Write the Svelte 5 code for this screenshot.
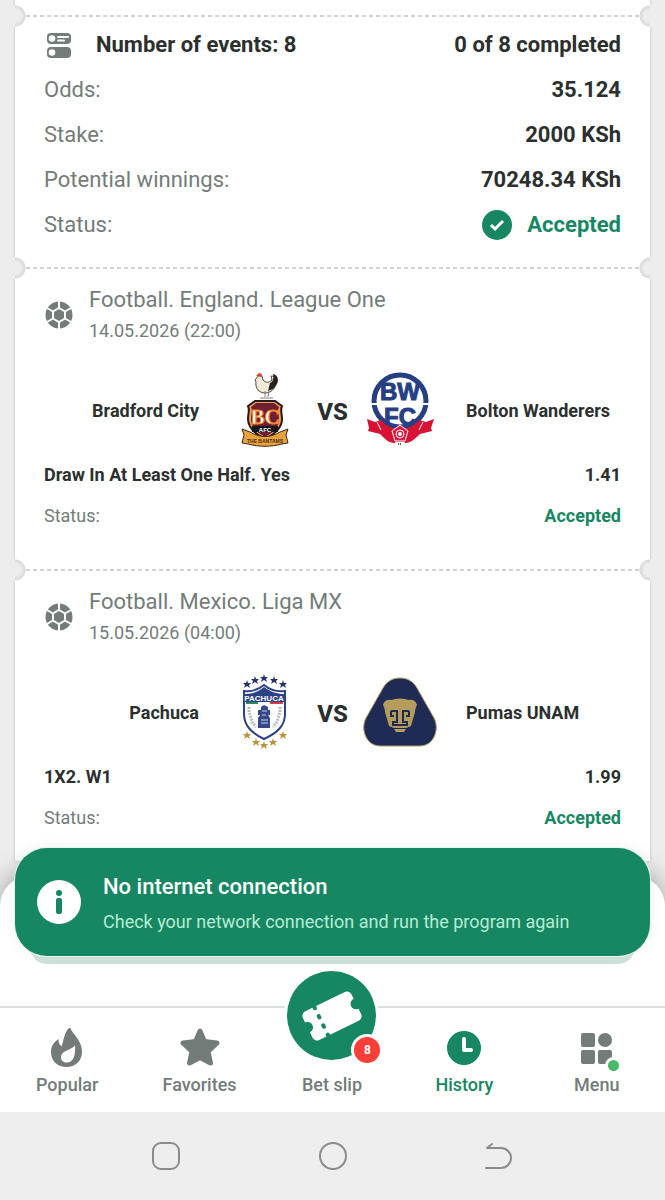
<script>
  const summary = [
    { label: "Odds:", value: "35.124" },
    { label: "Stake:", value: "2000 KSh" },
    { label: "Potential winnings:", value: "70248.34 KSh" },
  ];

  const events = [
    {
      league: "Football. England. League One",
      date: "14.05.2026 (22:00)",
      home: { name: "Bradford City", crest: bradford },
      away: { name: "Bolton Wanderers", crest: bolton },
      market: "Draw In At Least One Half. Yes",
      odds: "1.41",
    },
    {
      league: "Football. Mexico. Liga MX",
      date: "15.05.2026 (04:00)",
      home: { name: "Pachuca", crest: pachuca },
      away: { name: "Pumas UNAM", crest: pumas },
      market: "1X2. W1",
      odds: "1.99",
    },
  ];

  const blueStars = [[20, 10], [28, 6], [37, 4], [47, 6], [56, 10]];
  const goldStars = [[20, 61], [29, 68], [37, 71], [46, 68], [56, 61]];

  const tabs = [
    { label: "Popular", icon: flame },
    { label: "Favorites", icon: star },
    { label: "Bet slip", icon: ticket, count: 8 },
    { label: "History", icon: clock },
    { label: "Menu", icon: grid, dot: true },
  ];

  let active = $state("History");
</script>

{#snippet bradford()}
  <svg class="crest" viewBox="0 0 76 76" aria-hidden="true">
    <path d="M28 8l4-5 3 1 1 4c3 3 6 3 9 0l-1-4c4 0 6 3 5 7-1 6-5 10-11 10-6 0-10-5-9-11z" fill="#f3ead8" stroke="#4b463e" stroke-width="1" />
    <path d="M43 11c3-1 4-5 3-9 5 1 6 6 4 10l-4 5-5 2z" fill="#26221e" />
    <path d="M29 4l3-3 3 1-1 3z" fill="#d8432f" />
    <path d="M38 19v6M42 18l-1 7M33 26h13" stroke="#8a8274" fill="none" />
    <path d="M28 29h20l7 5c-2 4 0 8 0 13 0 9-7 15-17 20-10-5-17-11-17-20 0-5 2-9 0-13z" fill="#f0a04b" stroke="#25191c" stroke-width="2" />
    <path d="M29 31h18l5 4c-2 4 0 8 0 12 0 8-5 13-14 18-9-5-14-10-14-18 0-4 2-8 0-12z" fill="#6d1f35" />
    <text x="38" y="52" text-anchor="middle" font-family="Liberation Serif, serif" font-weight="700" font-size="21" fill="#fff" stroke="#f07d1e" stroke-width="1">BC</text>
    <path d="M25 54h26v6H25z" fill="#17171a" />
    <text x="38" y="60" text-anchor="middle" font-family="Liberation Sans, sans-serif" font-weight="700" font-size="6" fill="#fff">AFC</text>
    <path d="M15 57l8 3c10 6 20 6 30 0l8-3-2 6 2 8-6 1c-11 3-23 3-34 0l-6-1 2-8z" fill="#e8a23d" stroke="#3c2a18" />
    <text x="38" y="71" text-anchor="middle" font-family="Liberation Sans, sans-serif" font-weight="700" font-size="5" fill="#4a2d12">THE BANTAMS</text>
  </svg>
{/snippet}

{#snippet bolton()}
  <svg class="crest" viewBox="0 0 76 76" aria-hidden="true">
    <g font-family="Liberation Sans, sans-serif" font-weight="700" font-size="24" text-anchor="middle" fill="#263f82" stroke="#263f82">
      <text x="38" y="28">BW</text>
      <text x="38" y="53">FC</text>
    </g>
    <circle cx="38" cy="29" r="26" fill="none" stroke="#263f82" stroke-width="5" />
    <path d="M9 32h58" stroke="#fff" stroke-width="2" />
    <path d="M5 47l8 3 6-2c5 6 11 9 19 9s14-3 19-9l7 2 8-3-3 9 1 3-12 3c-5 5-10 9-14 9H32c-5 0-9-4-14-9L6 59l1-3z" fill="#d71234" />
    <path d="M15 50l4 8M61 50l-4 8" stroke="#fff" />
    <path d="M38 53l8 6-3 10H33l-3-10z" fill="#e0193c" stroke="#fff" />
    <circle cx="38" cy="62" r="4" fill="none" stroke="#fff" />
    <circle cx="38" cy="62" r="2" fill="#fff" />
    <path d="M33 70h10l-2 5h-6z" fill="#fff" />
    <path d="M36 72h4" stroke="#4a5a55" stroke-width="2" stroke-dasharray="1 1" />
  </svg>
{/snippet}

{#snippet smallStar(x, y, color)}
  <path transform="translate({x} {y})" d="M0-4l1 3h3L2 1l1 3-3-2-3 2 1-3-2-2h3z" fill={color} />
{/snippet}

{#snippet pachuca()}
  <svg class="crest" viewBox="0 0 76 76" aria-hidden="true">
    {#each blueStars as [x, y]}
      {@render smallStar(x, y, "#24346f")}
    {/each}
    <path d="M37 11c6 5 13 7 21 6v23c0 12-8 19-21 25C25 59 17 52 17 40V17c8 1 14-1 20-6z" fill="#fff" stroke="#2c4284" stroke-width="2" />
    <path d="M18 20c8 0 13-2 19-7 7 5 13 7 20 7v8H18z" fill="#2c4284" />
    <text x="37" y="27" text-anchor="middle" font-family="Liberation Sans, sans-serif" font-weight="700" font-size="8" fill="#fff">PACHUCA</text>
    <path d="M19 29h12" stroke="#2e8a60" stroke-width="2" />
    <path d="M43 29h13" stroke="#d63b49" stroke-width="2" />
    <path d="M34 33l3-2 4 2v3h2v5h-2l2 3v10H31V44l2-3h-2v-5h3z" fill="#34488a" />
    <path d="M35 37h5M35 41h4M34 46h7M34 49h7" stroke="#c9d1ea" />
    <path d="M22 33v5l3 10 4 5M53 33v5l-3 10-4 5" fill="none" stroke="#b9bcc6" stroke-width="3" stroke-dasharray="2 1" />
    {#each goldStars as [x, y]}
      {@render smallStar(x, y, "#b8943a")}
    {/each}
  </svg>
{/snippet}

{#snippet pumas()}
  <svg class="crest" viewBox="0 0 76 76" aria-hidden="true">
    <path d="M38 4c7 0 13 3 17 10l17 30c3 6 3 13 0 19-3 6-8 9-15 9H19c-7 0-12-3-15-9-3-6-3-13 0-19l17-30C25 7 31 4 38 4z" fill="#1f2a55" stroke="#b19a5e" />
    <path d="M29 26c6-2 12-2 18 0 4-1 7 1 8 5-1 2-2 4-2 7l-4 14-5 2H32l-5-2-4-14c0-3-1-5-2-7 1-4 4-6 8-5z" fill="#b39c5c" />
    <path d="M29 37h6v11h-4v3h14v-3h-4V37h6M29 37v5h3M47 37v5h-3" fill="none" stroke="#1f2a55" stroke-width="2" />
    <path d="M32 55h12l-2 3h-8z" fill="#b39c5c" />
  </svg>
{/snippet}

{#snippet ball()}
  <svg class="row-icon" viewBox="0 0 30 30" aria-hidden="true">
    <circle cx="15" cy="16" r="13.500" fill="#737c79" />
    <path d="M15 16V2M15 16v14M15 16L3 9M15 16l12-7M15 16L3 23M15 16l12 7" stroke="#fff" stroke-width="2" />
    <path d="M15 9l6 3.500v7L15 23l-6-3.500v-7z" fill="#737c79" stroke="#fff" stroke-width="2" />
  </svg>
{/snippet}

{#snippet flame()}
  <svg class="tab-icon" viewBox="0 0 40 40" aria-hidden="true">
    <path fill="currentColor" fill-rule="evenodd" d="M23-1c2 7 12 13 12 24.500C35 33 28.500 39 19.500 39S4 33 4 24c0-6 3-10 7.500-13 0 3 .5 5 3 7.500C17 12 17 4 23-1zm5 18c-2 5-14 5-14 12.500 0 3 2.500 5 6 5 5.500 0 9-6 8-17.500z" />
  </svg>
{/snippet}

{#snippet star()}
  <svg class="tab-icon" viewBox="0 0 40 40" aria-hidden="true">
    <path fill="currentColor" stroke="currentColor" stroke-width="5" stroke-linejoin="round" d="M20 3l4.500 10.500L37 15l-9 8.500L30.500 35 20 29.500 9.500 35 12 23.500 3 15l12.500-1.500z" />
  </svg>
{/snippet}

{#snippet ticket()}
  <svg class="fab-icon" viewBox="0 0 60 60" aria-hidden="true">
    <g transform="rotate(-26 30 30)">
      <path fill="#fff" d="M8 14h44a5 5 0 0 1 5 5v5a5.500 5.500 0 0 0 0 11v6a5 5 0 0 1-5 5H8a5 5 0 0 1-5-5v-6a5.500 5.500 0 0 0 0-11v-5a5 5 0 0 1 5-5z" />
      <path d="M18 14v34" stroke="#168762" stroke-width="4" stroke-linecap="round" stroke-dasharray="1.500 8.800" />
    </g>
  </svg>
{/snippet}

{#snippet clock()}
  <svg class="tab-icon" viewBox="0 0 40 40" aria-hidden="true">
    <circle cx="20" cy="20" r="17" fill="currentColor" />
    <path d="M20 11v11h7" fill="none" stroke="#fff" stroke-width="4" stroke-linecap="round" stroke-linejoin="round" />
  </svg>
{/snippet}

{#snippet grid()}
  <svg class="tab-icon" viewBox="0 0 40 40" aria-hidden="true">
    <g fill="currentColor">
      <rect x="4" y="5" width="14" height="14" rx="2" />
      <circle cx="28" cy="12" r="7" />
      <rect x="4" y="22" width="14" height="14" rx="2" />
      <rect x="21" y="22" width="14" height="14" rx="2" />
    </g>
  </svg>
{/snippet}

<div class="screen">
  <main>
    <div class="slip-list">
      <section class="slip totals">
        <div class="row">
          <h2>
            <svg class="row-icon" viewBox="0 0 30 30" aria-hidden="true">
              <rect x="3" y="3" width="24" height="11" rx="4" fill="#737c79" />
              <rect x="3" y="17" width="24" height="11" rx="4" fill="#737c79" />
              <circle cx="8" cy="8.500" r="3.300" fill="#fff" />
              <circle cx="8" cy="22.500" r="3.300" fill="#fff" />
              <path d="M14 7h10M14 10.500h6" stroke="#fff" stroke-width="2" stroke-linecap="round" />
            </svg>
            Number of events: 8
          </h2>
          <strong>0 of 8 completed</strong>
        </div>
        {#each summary as item}
          <div class="row">
            <span>{item.label}</span>
            <strong>{item.value}</strong>
          </div>
        {/each}
        <div class="row">
          <span>Status:</span>
          <strong class="accepted">
            <svg viewBox="0 0 30 30" aria-hidden="true">
              <circle cx="15" cy="15" r="15" fill="#168762" />
              <path d="M9 15l4 4 8-8" fill="none" stroke="#fff" stroke-width="3" />
            </svg>
            Accepted
          </strong>
        </div>
      </section>

      {#each events as event}
        <section class="slip event">
          <header>
            {@render ball()}
            <div>
              <h3>{event.league}</h3>
              <time>{event.date}</time>
            </div>
          </header>
          <div class="teams">
            <b class="home">{event.home.name}</b>
            {@render event.home.crest()}
            <span class="vs">VS</span>
            {@render event.away.crest()}
            <b class="away">{event.away.name}</b>
          </div>
          <div class="line">
            <b>{event.market}</b>
            <b>{event.odds}</b>
          </div>
          <div class="line">
            <span>Status:</span>
            <b class="accepted">Accepted</b>
          </div>
        </section>
      {/each}
    </div>
  </main>

  <footer>
    <div class="toast" role="status">
      <svg viewBox="0 0 44 44" aria-hidden="true">
        <circle cx="22" cy="22" r="22" fill="#fff" />
        <circle cx="22" cy="13" r="3" fill="#168762" />
        <rect x="19" y="18" width="6" height="16" rx="2" fill="#168762" />
      </svg>
      <div>
        <strong>No internet connection</strong>
        <p>Check your network connection and run the program again</p>
      </div>
    </div>

    <nav>
      {#each tabs as tab}
        <button class:active={tab.label === active} onclick={() => (active = tab.label)}>
          <span class:fab={tab.count} class="icon">
            {@render tab.icon()}
            {#if tab.count}<span class="badge">{tab.count}</span>{/if}
            {#if tab.dot}<span class="dot"></span>{/if}
          </span>
          {tab.label}
        </button>
      {/each}
    </nav>

    <div class="system">
      <button aria-label="Recent apps">
        <svg viewBox="0 0 30 30"><rect x="2" y="2" width="26" height="26" rx="8" /></svg>
      </button>
      <button aria-label="Home">
        <svg viewBox="0 0 30 30"><circle cx="15" cy="15" r="13" /></svg>
      </button>
      <button aria-label="Back">
        <svg viewBox="0 0 30 30"><path d="M8 3L3 7h14a10 10 0 0 1 0 20H2" /></svg>
      </button>
    </div>
  </footer>
</div>

<style>
  :global(body) {
    margin: 0;
    background: #eee;
  }

  .screen {
    --green: #168762;
    --grey: #737c79;
    --ink: #2b302e;
    font-family: Roboto, sans-serif;
    font-size: 22px;
    color: var(--grey);
    background: #ededed;
    overflow: hidden;
  }

  h2,
  h3,
  p {
    margin: 0;
    font: inherit;
  }

  button {
    padding: 0;
    border: 0;
    background: none;
    font: inherit;
    color: inherit;
  }

  svg {
    display: block;
    flex: none;
  }

  main {
    padding: 0 15px 15px;
  }

  .slip-list {
    padding-top: 15px;
    background: #fff;
    box-shadow: 0 0 3px rgba(0, 0, 0, 0.2);
  }

  .slip {
    position: relative;
    padding: 0 29px;
  }

  /* perforation between the parts of the ticket */
  .slip::before {
    content: "";
    display: block;
    height: 2px;
    margin: 0 -18px;
    background: repeating-linear-gradient(90deg, #d2d4d3 0 4px, #fff 4px 7px);
  }

  /* round bites at both ends of the perforation */
  .slip::after {
    --half: linear-gradient(#ededed, #ededed);
    --bite: radial-gradient(circle, #ededed 6px, #d9d9d9 10px, transparent 11px);
    content: "";
    position: absolute;
    top: -10px;
    left: -11px;
    right: -11px;
    height: 22px;
    background:
      var(--half) left / 11px 22px no-repeat,
      var(--half) right / 11px 22px no-repeat,
      var(--bite) left / 22px 22px no-repeat,
      var(--bite) right / 22px 22px no-repeat;
  }

  .totals {
    padding-bottom: 20px;
  }

  .totals::before {
    margin-bottom: 5px;
  }

  .row,
  .line {
    display: flex;
    align-items: center;
    justify-content: space-between;
  }

  .row {
    height: 45px;
  }

  h2 {
    display: flex;
    align-items: center;
    gap: 22px;
    font-weight: 700;
    color: var(--ink);
  }

  .row-icon {
    width: 30px;
    height: 30px;
  }

  strong,
  b {
    font-weight: 700;
    color: var(--ink);
  }

  .row .accepted {
    display: flex;
    align-items: center;
    gap: 15px;
  }

  .accepted {
    color: var(--green);
  }

  .accepted svg {
    width: 30px;
    height: 30px;
  }

  .event {
    padding-bottom: 41px;
    font-size: 18px;
  }

  .event:last-child {
    padding-bottom: 31px;
  }

  header {
    display: flex;
    align-items: center;
    gap: 15px;
    padding-top: 17px;
  }

  h3 {
    margin-bottom: 6px;
    font-size: 22px;
    line-height: 28px;
  }

  time {
    display: block;
    line-height: 22px;
  }

  .teams {
    display: grid;
    grid-template-columns: 1fr 76px 59px 76px 1fr;
    align-items: center;
    margin: 30px 0 15px;
  }

  .home {
    margin-right: 28px;
    text-align: right;
  }

  .away {
    margin-left: 28px;
    white-space: nowrap;
  }

  .vs {
    padding-top: 4px;
    font-size: 24px;
    font-weight: 800;
    text-align: center;
    color: var(--ink);
  }

  .crest {
    width: 76px;
    height: 76px;
  }

  .line {
    line-height: 24px;
  }

  .line + .line {
    margin-top: 17px;
  }

  footer {
    position: relative;
    border-radius: 30px 30px 0 0;
    background: #fff;
    box-shadow: 0 0 30px rgba(0, 0, 0, 0.35);
  }

  footer::before {
    content: "";
    display: table;
  }

  .toast {
    display: flex;
    align-items: center;
    gap: 22px;
    min-height: 108px;
    margin: -28px 15px 50px;
    padding: 0 22px;
    border-radius: 32px;
    box-sizing: border-box;
    background: var(--green);
    box-shadow:
      0 0 0 1px #e3f6ef,
      0 23px 0 -15px #cce0d8,
      0 0 16px rgba(0, 0, 0, 0.06);
    font-size: 18px;
    color: #b5ecd4;
  }

  .toast svg {
    width: 44px;
    height: 44px;
  }

  .toast div {
    padding-top: 4px;
  }

  .toast strong {
    display: block;
    margin-bottom: 10px;
    font-size: 22px;
    font-weight: 500;
    line-height: 26px;
    color: #fff;
  }

  .toast p {
    line-height: 24px;
  }

  nav {
    display: grid;
    grid-template-columns: repeat(5, 1fr);
    padding: 0 2px 0 1px;
    border-top: 2px solid #dbe0de;
    background: #fff;
    font-size: 18px;
    font-weight: 500;
  }

  nav button {
    display: flex;
    flex-direction: column;
    align-items: center;
    padding: 20px 0 15px;
    line-height: 24px;
  }

  .icon {
    position: relative;
    margin-bottom: 5px;
  }

  .tab-icon {
    width: 40px;
    height: 40px;
  }

  .active {
    color: var(--green);
  }

  .fab {
    display: grid;
    place-items: center;
    width: 89px;
    height: 89px;
    margin-top: -57px;
    margin-bottom: 13px;
    border-radius: 50%;
    background: var(--green);
    box-shadow: 0 0 0 3px #fff;
  }

  .fab-icon {
    width: 60px;
    height: 60px;
  }

  .badge,
  .dot {
    position: absolute;
    border: 3px solid #fff;
    border-radius: 50%;
  }

  .badge {
    right: -7px;
    bottom: -6px;
    width: 26px;
    height: 26px;
    background: #fc3d38;
    font-size: 12px;
    font-weight: 700;
    line-height: 26px;
    color: #fff;
  }

  .dot {
    right: -5px;
    bottom: -6px;
    width: 11px;
    height: 11px;
    background: #4ab866;
  }

  .system {
    display: grid;
    grid-template-columns: repeat(3, 1fr);
    padding: 29px 12.5%;
    background: #eee;
  }

  .system button {
    display: grid;
    place-items: center;
  }

  .system svg {
    width: 30px;
    height: 30px;
    fill: none;
    stroke: #8b8b8b;
    stroke-width: 2px;
    stroke-linecap: round;
    stroke-linejoin: round;
  }
</style>
